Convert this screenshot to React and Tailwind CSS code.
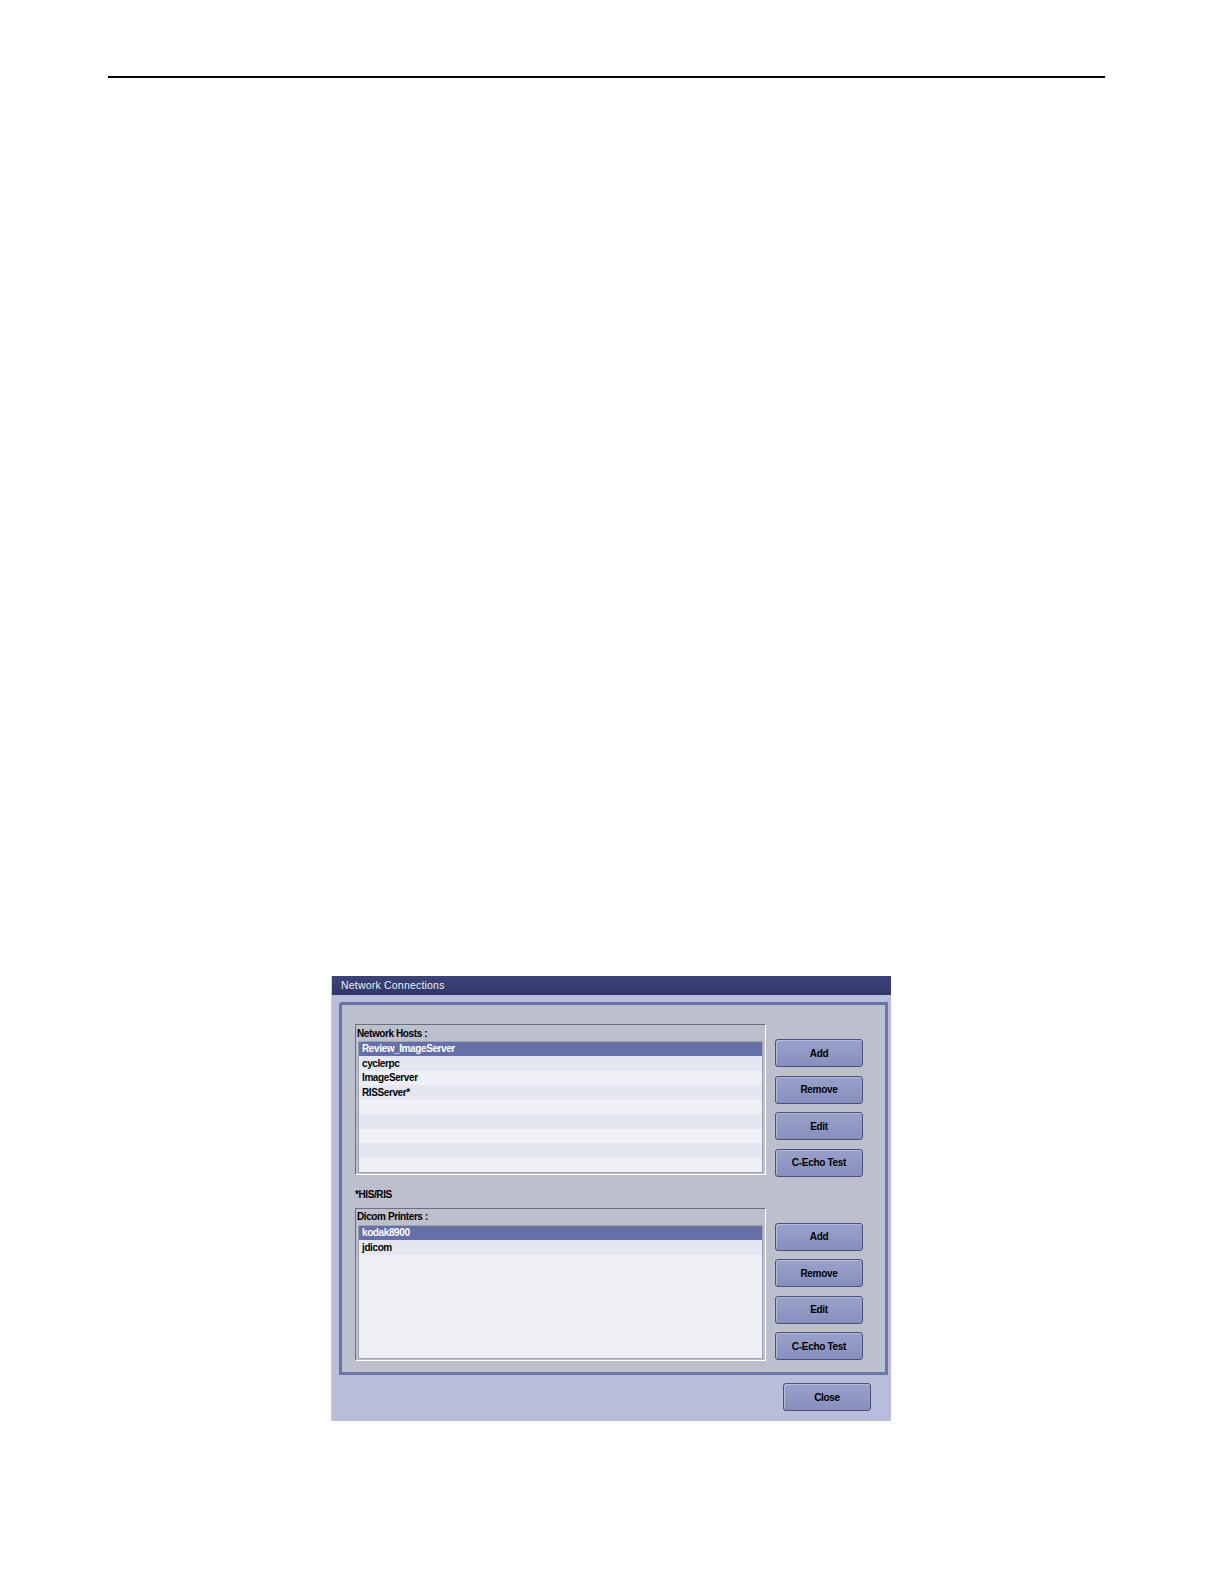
const hosts = ["Review_ImageServer", "cyclerpc", "ImageServer", "RISServer*", "", "", "", "", ""];
const printers = ["kodak8900", "jdicom"];

function ListRow({ label, index, selected }) {
  return (
    <div
      className={`h-[14.7px] flex items-center pl-[3px] text-[10px] font-bold tracking-[-0.4px] leading-none ${
        selected
          ? "bg-[#6670a6] text-white"
          : index % 2 === 0
          ? "bg-[#eef0f6] text-black"
          : "bg-[#e4e7f1] text-black"
      }`}>
      {label}
    </div>
  );
}

function ListBox({ title, items, height, fill }) {
  return (
    <div
      className="w-[411px] flex flex-col border-t border-l border-t-[#6c6e7c] border-l-[#6c6e7c] border-b border-r border-b-white border-r-white bg-[#bcbfcc]"
      style={{ height }}>
      <div className="h-[16px] flex items-center pl-[1px] text-[10px] font-bold tracking-[-0.4px] text-black">
        {title}
      </div>
      <div className="flex-1 mx-[2px] mb-[1px] border border-[#9ea1b0] bg-[#eef0f6] flex flex-col overflow-hidden">
        {items.map((it, i) => (
          <ListRow key={i} label={it} index={i} selected={i === 0} />
        ))}
        {fill && <div className="flex-1 bg-[#eef0f6]" />}
      </div>
    </div>
  );
}

function DlgButton({ children, className = "" }) {
  return (
    <button
      className={`w-[88px] h-[28px] rounded-[3px] border border-[#4a507c] bg-gradient-to-b from-[#9aa1c9] to-[#878fbd] shadow-[inset_1px_1px_0_#b4badb] text-[10px] font-bold tracking-[-0.3px] text-black ${className}`}>
      {children}
    </button>
  );
}

function ButtonStack() {
  return (
    <div className="mt-[15px] flex flex-col gap-[8.5px]">
      <DlgButton>Add</DlgButton>
      <DlgButton>Remove</DlgButton>
      <DlgButton>Edit</DlgButton>
      <DlgButton>C-Echo Test</DlgButton>
    </div>
  );
}

export default function App() {
  return (
    <div
      className="w-[1224px] h-[1584px] bg-white overflow-hidden"
      style={{ fontFamily: '"Liberation Sans", Arial, sans-serif' }}>
      <div className="mt-[76px] ml-[108px] w-[997px] h-[2px] bg-black" />

      <div className="mt-[898px] ml-[331px] w-[560px] h-[445px] bg-[#b8bdd9] border-l border-[#c9cce2] flex flex-col">
        <div className="h-[19px] bg-gradient-to-b from-[#3b4379] to-[#2f3769] flex items-center pl-[9px] text-[10.5px] tracking-[0.2px] text-[#eceef8]">
          Network Connections
        </div>

        <div className="mt-[7px] ml-[7px] w-[549px] h-[373px] border-[3px] border-[#6b73a8] rounded-tl-[3px] bg-[#bcbfcc] pt-[19px] pl-[13px] flex flex-col">
          <div className="flex gap-[9px]">
            <ListBox title="Network Hosts :" items={hosts} height={151} />
            <ButtonStack />
          </div>

          <div className="mt-[11px] h-[13px] flex items-center text-[10px] font-bold tracking-[-0.4px] text-black">
            *HIS/RIS
          </div>

          <div className="mt-[7px] flex gap-[9px]">
            <ListBox title="Dicom Printers :" items={printers} height={153} fill />
            <ButtonStack />
          </div>
        </div>

        <div className="mt-[8px] flex justify-end pr-[20px]">
          <DlgButton>Close</DlgButton>
        </div>
      </div>
    </div>
  );
}
